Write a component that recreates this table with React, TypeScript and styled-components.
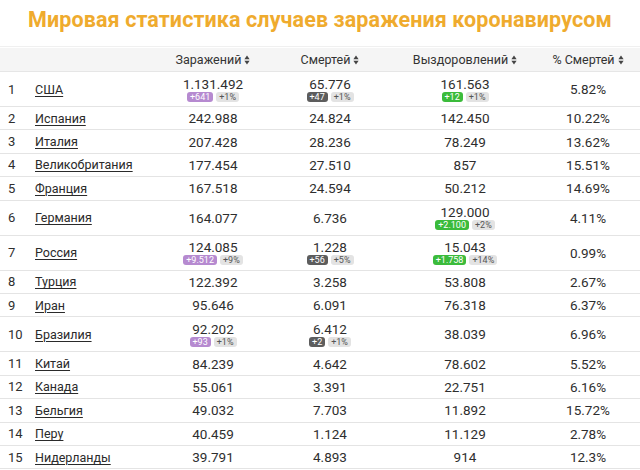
import React from "react";
import styled, { createGlobalStyle } from "styled-components";

const Global = createGlobalStyle`
  *, *::before, *::after { box-sizing: border-box; }
  html, body { margin: 0; padding: 0; background: #fff; }
  body { font-family: Roboto, "Noto Sans", "Liberation Sans", sans-serif; color: #2a2a2a; }
`;

const Page = styled.div`
  width: 640px;
  height: 470px;
  overflow: hidden;
  background: #fff;
`;

const Title = styled.h1`
  margin: 0;
  height: 47px;
  display: flex;
  align-items: flex-start;
  justify-content: center;
  padding-top: 7px;
  font-size: 21.5px;
  font-weight: 700;
  color: #efab2e;
  letter-spacing: 0.1px;
  border-bottom: 1px solid #f0f0f0;
`;

const Table = styled.div`
  display: flex;
  flex-direction: column;
`;

const cols = "28px 132px 106px 128px 142px 1fr";

const HeadRow = styled.div`
  display: grid;
  grid-template-columns: ${cols};
  height: 24px;
  margin-top: 1px;
  align-items: center;
  background: #f5f5f5;
  border-bottom: 1px solid #e6e6e6;
  font-size: 12.5px;
  color: #333;
`;

const HeadCell = styled.div`
  display: flex;
  align-items: center;
  justify-content: center;
  gap: 3px;
`;

const Row = styled.div<{ $tall?: boolean }>`
  display: grid;
  grid-template-columns: ${cols};
  height: ${(p) => (p.$tall ? "35px" : "23.4px")};
  align-items: center;
  border-bottom: 1px solid #e4e4e4;
  font-size: 13.5px;
  color: #2e2e2e;
`;

const Rank = styled.div`
  padding-left: 8px;
  font-size: 13px;
`;

const Country = styled.div`
  padding-left: 7px;
  font-size: 12.5px;
  text-decoration: underline;
  text-underline-offset: 2px;
  text-decoration-thickness: 1px;
  color: #2a2a2a;
`;

const NumCell = styled.div`
  display: flex;
  flex-direction: column;
  align-items: center;
  line-height: 14px;
`;

const Badges = styled.div`
  display: flex;
  gap: 3px;
  margin-top: 1px;
`;

const Badge = styled.span<{ $kind: "purple" | "green" | "dark" | "gray" }>`
  font-size: 9px;
  line-height: 10px;
  padding: 0 3px;
  border-radius: 3px;
  background: ${(p) =>
    p.$kind === "purple"
      ? "#b68ad0"
      : p.$kind === "green"
      ? "#3bbb3b"
      : p.$kind === "dark"
      ? "#5d5d5d"
      : "#e3e3e3"};
  color: ${(p) => (p.$kind === "gray" ? "#555" : "#fff")};
`;

const Sort = () => (
  <svg width="6" height="10" viewBox="0 0 6 10">
    <path d="M3 0.5 L5.6 4.2 H0.4 Z" fill="#444" />
    <path d="M3 9.5 L5.6 5.8 H0.4 Z" fill="#444" />
  </svg>
);

type Delta = { d: string; p: string };
type Data = {
  n: number;
  c: string;
  inf: string;
  infD?: Delta;
  dead: string;
  deadD?: Delta;
  rec: string;
  recD?: Delta;
  pct: string;
};

const rows: Data[] = [
  { n: 1, c: "США", inf: "1.131.492", infD: { d: "+641", p: "+1%" }, dead: "65.776", deadD: { d: "+47", p: "+1%" }, rec: "161.563", recD: { d: "+12", p: "+1%" }, pct: "5.82%" },
  { n: 2, c: "Испания", inf: "242.988", dead: "24.824", rec: "142.450", pct: "10.22%" },
  { n: 3, c: "Италия", inf: "207.428", dead: "28.236", rec: "78.249", pct: "13.62%" },
  { n: 4, c: "Великобритания", inf: "177.454", dead: "27.510", rec: "857", pct: "15.51%" },
  { n: 5, c: "Франция", inf: "167.518", dead: "24.594", rec: "50.212", pct: "14.69%" },
  { n: 6, c: "Германия", inf: "164.077", dead: "6.736", rec: "129.000", recD: { d: "+2.100", p: "+2%" }, pct: "4.11%" },
  { n: 7, c: "Россия", inf: "124.085", infD: { d: "+9.512", p: "+9%" }, dead: "1.228", deadD: { d: "+56", p: "+5%" }, rec: "15.043", recD: { d: "+1.758", p: "+14%" }, pct: "0.99%" },
  { n: 8, c: "Турция", inf: "122.392", dead: "3.258", rec: "53.808", pct: "2.67%" },
  { n: 9, c: "Иран", inf: "95.646", dead: "6.091", rec: "76.318", pct: "6.37%" },
  { n: 10, c: "Бразилия", inf: "92.202", infD: { d: "+93", p: "+1%" }, dead: "6.412", deadD: { d: "+2", p: "+1%" }, rec: "38.039", pct: "6.96%" },
  { n: 11, c: "Китай", inf: "84.239", dead: "4.642", rec: "78.602", pct: "5.52%" },
  { n: 12, c: "Канада", inf: "55.061", dead: "3.391", rec: "22.751", pct: "6.16%" },
  { n: 13, c: "Бельгия", inf: "49.032", dead: "7.703", rec: "11.892", pct: "15.72%" },
  { n: 14, c: "Перу", inf: "40.459", dead: "1.124", rec: "11.129", pct: "2.78%" },
  { n: 15, c: "Нидерланды", inf: "39.791", dead: "4.893", rec: "914", pct: "12.3%" },
];

const Num = ({ v, d, kind }: { v: string; d?: Delta; kind: "purple" | "green" | "dark" }) => (
  <NumCell>
    <span>{v}</span>
    {d && (
      <Badges>
        <Badge $kind={kind}>{d.d}</Badge>
        <Badge $kind="gray">{d.p}</Badge>
      </Badges>
    )}
  </NumCell>
);

export default function App() {
  return (
    <Page>
      <Global />
      <Title>Мировая статистика случаев заражения коронавирусом</Title>
      <Table>
        <HeadRow>
          <div />
          <div />
          <HeadCell>Заражений <Sort /></HeadCell>
          <HeadCell>Смертей <Sort /></HeadCell>
          <HeadCell>Выздоровлений <Sort /></HeadCell>
          <HeadCell>% Смертей <Sort /></HeadCell>
        </HeadRow>
        {rows.map((r) => (
          <Row key={r.n} $tall={!!(r.infD || r.deadD || r.recD)}>
            <Rank>{r.n}</Rank>
            <Country>{r.c}</Country>
            <Num v={r.inf} d={r.infD} kind="purple" />
            <Num v={r.dead} d={r.deadD} kind="dark" />
            <Num v={r.rec} d={r.recD} kind="green" />
            <NumCell>{r.pct}</NumCell>
          </Row>
        ))}
      </Table>
    </Page>
  );
}
